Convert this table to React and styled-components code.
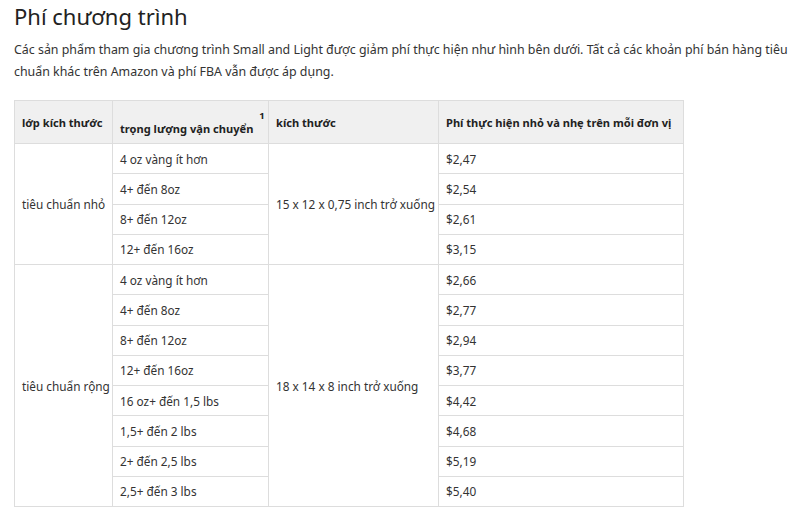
import React from 'react';
import styled, { createGlobalStyle } from 'styled-components';

const GlobalStyle = createGlobalStyle`
  html, body {
    margin: 0;
    padding: 0;
    background: #fff;
  }
  body {
    font-family: "Noto Sans", "Open Sans", Arial, sans-serif;
    color: #333;
  }
`;

const Page = styled.div`
  padding: 2px 0 0 14px;
  width: 800px;
  box-sizing: border-box;
`;

const Title = styled.h1`
  margin: 0;
  font-size: 22px;
  line-height: 29px;
  font-weight: 400;
  color: #222;
`;

const Intro = styled.p`
  margin: 8px 0 17px;
  font-size: 12.4px;
  line-height: 22px;
  color: #333;
`;

const Table = styled.table`
  border-collapse: collapse;
  width: 669px;
  table-layout: fixed;
  font-size: 11.8px;
  color: #333;
`;

const Th = styled.th`
  background: #f0f0f0;
  border: 1px solid #ddd;
  height: 42px;
  padding: 0 7px;
  text-align: left;
  vertical-align: middle;
  font-size: 11.1px;
  font-weight: 700;
  color: #222;
  white-space: nowrap;
`;

const Sup = styled.span`
  display: inline-block;
  font-size: 9.5px;
  vertical-align: 14px;
  margin-left: 6px;
`;

const Td = styled.td`
  border: 1px solid #ddd;
  height: 29.25px;
  padding: 0 7px;
  vertical-align: middle;
  white-space: nowrap;
`;

const groups = [
  {
    name: 'tiêu chuẩn nhỏ',
    size: '15 x 12 x 0,75 inch trở xuống',
    rows: [
      ['4 oz vàng ít hơn', '$2,47'],
      ['4+ đến 8oz', '$2,54'],
      ['8+ đến 12oz', '$2,61'],
      ['12+ đến 16oz', '$3,15'],
    ],
  },
  {
    name: 'tiêu chuẩn rộng',
    size: '18 x 14 x 8 inch trở xuống',
    rows: [
      ['4 oz vàng ít hơn', '$2,66'],
      ['4+ đến 8oz', '$2,77'],
      ['8+ đến 12oz', '$2,94'],
      ['12+ đến 16oz', '$3,77'],
      ['16 oz+ đến 1,5 lbs', '$4,42'],
      ['1,5+ đến 2 lbs', '$4,68'],
      ['2+ đến 2,5 lbs', '$5,19'],
      ['2,5+ đến 3 lbs', '$5,40'],
    ],
  },
];

export default function App() {
  return (
    <Page>
      <GlobalStyle />
      <Title>Phí chương trình</Title>
      <Intro>
        Các sản phẩm tham gia chương trình Small and Light được giảm phí thực hiện như hình bên dưới. Tất cả các khoản phí bán hàng tiêu chuẩn khác trên Amazon và phí FBA vẫn được áp dụng.
      </Intro>
      <Table>
        <colgroup>
          <col style={{ width: 98 }} />
          <col style={{ width: 156 }} />
          <col style={{ width: 170 }} />
          <col style={{ width: 245 }} />
        </colgroup>
        <thead>
          <tr>
            <Th>lớp kích thước</Th>
            <Th>
              trọng lượng vận chuyển<Sup>1</Sup>
            </Th>
            <Th>kích thước</Th>
            <Th>Phí thực hiện nhỏ và nhẹ trên mỗi đơn vị</Th>
          </tr>
        </thead>
        <tbody>
          {groups.map((g) =>
            g.rows.map((r, i) => (
              <tr key={g.name + i}>
                {i === 0 && <Td rowSpan={g.rows.length}>{g.name}</Td>}
                <Td>{r[0]}</Td>
                {i === 0 && <Td rowSpan={g.rows.length}>{g.size}</Td>}
                <Td>{r[1]}</Td>
              </tr>
            ))
          )}
        </tbody>
      </Table>
    </Page>
  );
}
